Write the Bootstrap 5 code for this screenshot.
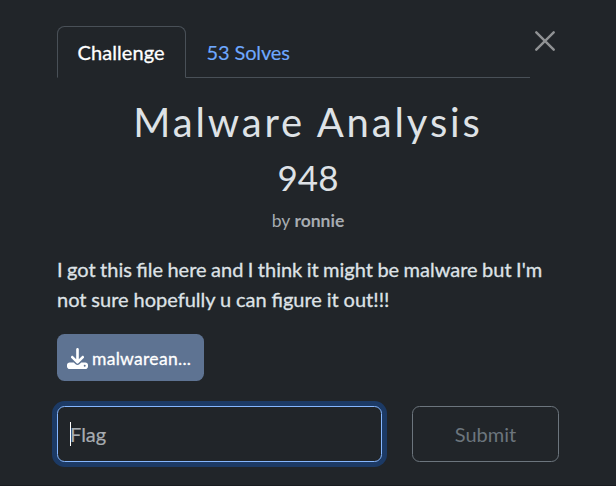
<!DOCTYPE html>
<html lang="en" data-bs-theme="dark">
<head>
<meta charset="utf-8">
<title>Malware Analysis</title>
<meta name="viewport" content="width=device-width, initial-scale=1">
<link href="https://cdn.jsdelivr.net/npm/bootstrap@5.3.0/dist/css/bootstrap.min.css" rel="stylesheet">
<style>
html { font-size: 20px; }
body { font-family: Lato, "Liberation Sans", sans-serif; background: #212529; color: #dee2e6; overflow: hidden; }
.challenge-panel { height: 486px; padding: 26px 57px 0; border-bottom: 1px solid #191c20; }
.tab-strip { width: 473px; }
.nav-tabs { --bs-nav-tabs-border-radius: 7.5px; }
.nav-tabs .nav-link { padding: 10px 20px 10px 19.5px; color: #6ea8fe; letter-spacing: -.12px; -webkit-text-stroke: .15px; }
.nav-tabs .nav-link.active { width: 129px; padding: 10px 0 10px 19.5px; letter-spacing: .08px; -webkit-text-stroke: .3px; }
.close-btn { width: 20px; height: 20px; margin: 5px 4px 0 0; opacity: .5; }
.chal-name { color: #dee2e6; font-size: 40px; font-weight: 400; letter-spacing: 2.85px; margin: 20px 0 10px; }
.chal-value { color: #dee2e6; font-size: 35px; font-weight: 400; margin-bottom: 10px; }
.chal-author { font-size: 17.5px; line-height: 26px; color: #a7acb1; margin-bottom: 20px; }
.chal-desc { margin-bottom: 20px; word-spacing: -.25px; -webkit-text-stroke: .3px; }
.first-line { word-spacing: -.68px; }
.file-btn { width: 147px; height: 47px; background: #5e7392; border-radius: 7.5px; font-size: 17.5px; padding: 0 9px; gap: 4px; -webkit-text-stroke: .3px; }
.file-btn svg { width: 21px; height: 21px; margin-top: 2px; }
.file-btn span { padding-top: 4px; letter-spacing: .3px; white-space: nowrap; }
.submit-row { margin-top: 25px; gap: 30px; }
.flag-field { width: 325px; }
.flag-field .form-control { height: 56px; padding: 10px 12px; border-radius: 7.5px; background: #212529; border-color: #86b7fe; box-shadow: 0 0 0 5px #1c3a65; }
.flag-field .form-control::placeholder { color: #a7acb1; -webkit-text-stroke: .2px; }
.caret { left: 13px; top: 16px; width: 1px; height: 24px; background: #fff; }
.submit-btn { width: 147px; height: 56px; border-radius: 7.5px; }
.submit-btn:disabled { opacity: 1; color: #6c757d; border-color: #6c757d; }
</style>
<script src="https://cdn.jsdelivr.net/npm/bootstrap@5.3.0/dist/js/bootstrap.bundle.min.js"></script>
</head>
<body>
<main class="challenge-panel">
  <div class="d-flex justify-content-between">
    <ul class="nav nav-tabs tab-strip">
      <li class="nav-item"><a class="nav-link active text-white" href="#">Challenge</a></li>
      <li class="nav-item"><a class="nav-link" href="#">53 Solves</a></li>
    </ul>
    <button class="close-btn btn border-0 p-0 d-flex" aria-label="Close">
      <svg width="20" height="20" viewBox="0 0 20 20" stroke="#fff" stroke-width="2.4" stroke-linecap="round"><path d="M1.3 1.3 18.7 18.7M18.7 1.3 1.3 18.7"/></svg>
    </button>
  </div>
  <h2 class="chal-name text-center">Malware Analysis</h2>
  <h3 class="chal-value text-center">948</h3>
  <p class="chal-author text-center">by <b>ronnie</b></p>
  <p class="chal-desc"><span class="first-line">I got this file here and I think it might be malware but I'm</span> not sure hopefully u can figure it out!!!</p>
  <a class="file-btn btn text-white d-flex align-items-center" href="#">
    <svg class="flex-shrink-0" viewBox="0 0 512 512" fill="#fff"><path d="M288 32c0-17.700-14.300-32-32-32s-32 14.300-32 32V274.700l-73.400-73.400c-12.500-12.500-32.800-12.500-45.300 0s-12.500 32.800 0 45.300l128 128c12.500 12.500 32.800 12.500 45.300 0l128-128c12.500-12.500 12.500-32.800 0-45.300s-32.800-12.500-45.300 0L288 274.700V32zM64 352c-35.300 0-64 28.700-64 64v32c0 35.300 28.700 64 64 64H448c35.300 0 64-28.700 64-64V416c0-35.300-28.700-64-64-64H346.500l-45.300 45.300c-25 25-65.500 25-90.500 0L165.500 352H64zm368 56a24 24 0 1 1 0 48 24 24 0 1 1 0-48z"/></svg>
    <span>malwarean...</span>
  </a>
  <div class="submit-row d-flex">
    <div class="flag-field position-relative">
      <input class="form-control" type="text" placeholder="Flag" aria-label="Flag">
      <span class="caret position-absolute"></span>
    </div>
    <button class="submit-btn btn btn-outline-secondary" disabled>Submit</button>
  </div>
</main>
</body>
</html>
